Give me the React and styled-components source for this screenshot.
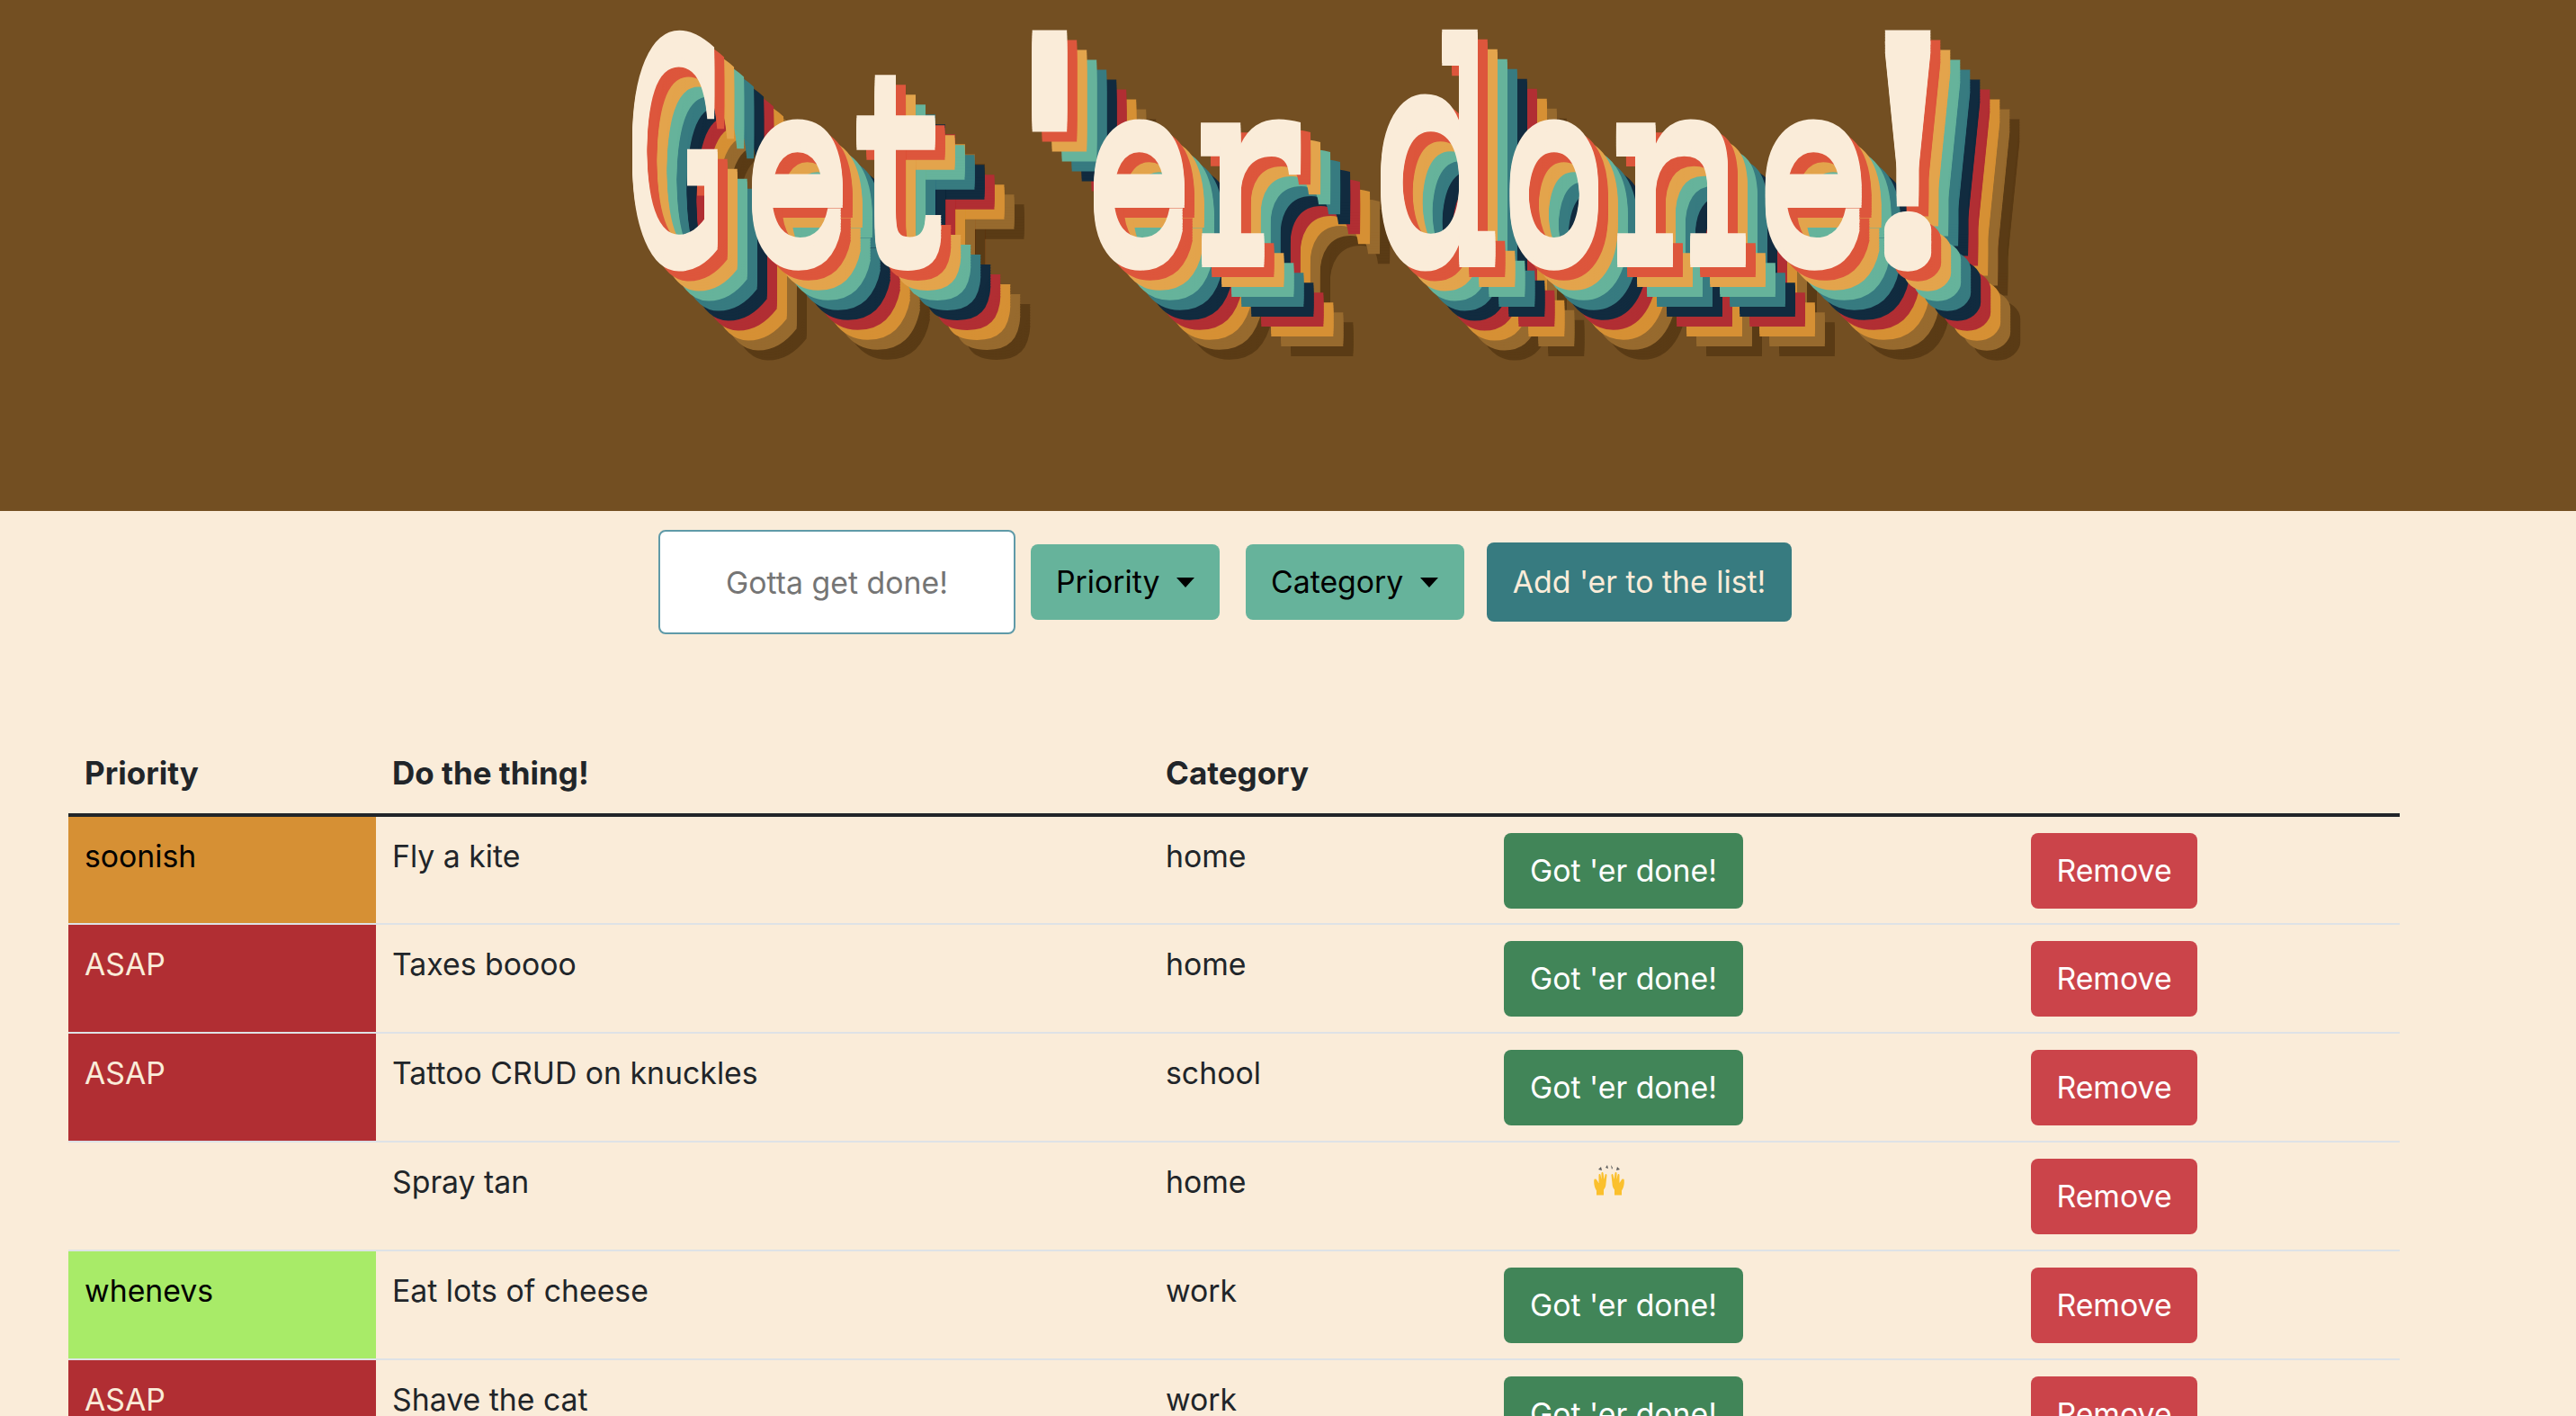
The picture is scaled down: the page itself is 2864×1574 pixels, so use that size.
import React from 'react'
import styled, { createGlobalStyle } from 'styled-components'

const CREAM = '#faecd9'
const STRIPES = ['#dd563c', '#e3a44c', '#66b39b', '#377b80', '#112b3f', '#b12e33', '#d69034', '#976a2e', '#5a3b15']

// each glyph is smeared vertically so the horizontals get fat like the original display face
const SMEAR = 26
const STEP = 3
const buildShadow = (sx, sy) => {
  const out = []
  const layers = [CREAM, ...STRIPES]
  layers.forEach((color, i) => {
    for (let dy = -SMEAR / 2; dy <= SMEAR / 2; dy += STEP) {
      out.push(`${((11 * i) / sx).toFixed(2)}px ${((11 * i + dy) / sy).toFixed(2)}px 0 ${color}`)
    }
  })
  return out.join(',')
}

const GLYPHS = [
  { c: 'G', w: 131, sx: 0.46, sy: 1.04 },
  { c: 'e', w: 119, sx: 0.66, sy: 0.85 },
  { c: 't', w: 154, sx: 0.83, sy: 0.9 },
  { c: "'", w: 107, sx: 1.6, sy: 1.06 },
  { c: 'e', w: 120, sx: 0.66, sy: 0.85 },
  { c: 'r', w: 198, sx: 0.81, sy: 0.85 },
  { c: 'd', w: 145, sx: 0.73, sy: 1.02 },
  { c: 'o', w: 119, sx: 0.63, sy: 0.85 },
  { c: 'n', w: 164, sx: 0.8, sy: 0.85 },
  { c: 'e', w: 88, sx: 0.7, sy: 0.85 },
  { c: '!', w: 59, sx: 1.3, sy: 1.06 },
]

const ROWS = [
  { priority: 'soonish', task: 'Fly a kite', category: 'home' },
  { priority: 'ASAP', task: 'Taxes boooo', category: 'home' },
  { priority: 'ASAP', task: 'Tattoo CRUD on knuckles', category: 'school' },
  { priority: '', task: 'Spray tan', category: 'home', done: true },
  { priority: 'whenevs', task: 'Eat lots of cheese', category: 'work' },
  { priority: 'ASAP', task: 'Shave the cat', category: 'work' },
]

const PRIORITY_COLORS = {
  soonish: { bg: '#d69034', fg: '#000' },
  ASAP: { bg: '#b12e33', fg: CREAM },
  whenevs: { bg: '#a8eb68', fg: '#000' },
}

const GlobalStyle = createGlobalStyle`
  html, body {
    margin: 0;
    height: 100%;
    overflow: hidden;
    background: ${CREAM};
    font-family: Inter, "Liberation Sans", sans-serif;
    font-size: 33.8px;
    line-height: 48px;
    color: #212529;
  }
`

const Banner = styled.header`
  height: 568px;
  background: #734f22;
  overflow: hidden;
`

const Title = styled.h1`
  margin: 0;
  padding: 24px 0 0 695px;
  display: flex;
  font-family: "DejaVu Serif", serif;
  font-weight: 400;
  font-size: 310px;
  line-height: 310px;
  color: ${CREAM};
`

const Glyph = styled.span`
  display: block;
  flex: none;
  white-space: pre;
  transform-origin: left 262px;
`

const Form = styled.form`
  display: flex;
  align-items: center;
  height: 116px;
  margin-top: 21px;
  padding-left: 732px;
`

const TaskInput = styled.input`
  box-sizing: border-box;
  width: 397px;
  height: 116px;
  margin-right: 17px;
  border: 2px solid #5f9aa8;
  border-radius: 8px;
  background: #fff;
  text-align: center;
  font: inherit;
  &::placeholder {
    color: #757575;
    opacity: 1;
  }
`

const Dropdown = styled.button`
  display: flex;
  align-items: center;
  box-sizing: border-box;
  height: 84px;
  width: ${(p) => p.$width}px;
  margin-right: ${(p) => p.$gap}px;
  padding: 0 0 0 28px;
  border: 0;
  border-radius: 8px;
  background: #66b39b;
  color: #000;
  font: inherit;
  &::after {
    content: '';
    margin-left: 19px;
    border-top: 11px solid #000;
    border-left: 10px solid transparent;
    border-right: 10px solid transparent;
  }
`

const AddButton = styled.button`
  box-sizing: border-box;
  height: 88px;
  width: 339px;
  padding: 0;
  border: 0;
  border-radius: 8px;
  background: #377b80;
  color: ${CREAM};
  font: inherit;
`

const Table = styled.table`
  width: 2592px;
  margin: 115px 0 0 76px;
  border-collapse: collapse;
  table-layout: fixed;
`

const Head = styled.th`
  height: 77px;
  padding: 0 18px 7px;
  text-align: left;
  font-weight: 700;
  font-size: 35px;
  border-bottom: 4px solid #212529;
`

const Row = styled.tr`
  height: 121px;
  border-bottom: 2px solid #dee2e6;
`

const Cell = styled.td`
  padding: 0 16px;
  vertical-align: top;
  line-height: 48px;
`

const TextCell = styled(Cell)`
  padding: 20px 18px 0;
`

const PriorityCell = styled(TextCell)`
  background: ${(p) => p.$bg || 'transparent'};
  color: ${(p) => p.$fg || 'inherit'};
`

const ActionCell = styled(Cell)`
  padding-top: 18px;
`

const ActionButton = styled.button`
  display: block;
  box-sizing: border-box;
  height: 84px;
  width: ${(p) => p.$width}px;
  padding: 0;
  border: 0;
  border-radius: 8px;
  background: ${(p) => p.$bg};
  color: #fff;
  font: inherit;
`

const Hands = styled.svg`
  display: block;
  width: 38px;
  height: 36px;
  margin: 4px 0 0 96px;
`

const RaisedHands = () => (
  <Hands viewBox="0 0 38 36">
    <g fill="#5c5c5c">
      <path d="M7 6l3-3 1 4z" />
      <path d="M15 4l2-3 1 4z" />
      <path d="M21 1l2 3-1 2z" />
      <path d="M28 3l3 3-4 1z" />
    </g>
    <g fill="#fbc02d">
      <path d="M3 17c1-1 2 0 2.500 1l2 3 0-9c0-1.500 2-1.500 2 0l1 5 0-7c0-1.500 2-1.500 2 0l1 7 1-5c.5-1.500 2-1 2 .5l-1 9c0 3-1 5-2.500 7l0 6-8 0 0-5c-2-3-3.500-8-2.500-13z" />
      <path d="M35 17c-1-1-2 0-2.500 1l-2 3 0-9c0-1.500-2-1.500-2 0l-1 5 0-7c0-1.500-2-1.500-2 0l-1 7-1-5c-.5-1.500-2-1-2 .5l1 9c0 3 1 5 2.500 7l0 6 8 0 0-5c2-3 3.500-8 2.500-13z" />
    </g>
  </Hands>
)

export default function App() {
  return (
    <>
      <GlobalStyle />
      <Banner>
        <Title>
          {GLYPHS.map((g, i) => (
            <Glyph
              key={i}
              style={{
                width: g.w,
                transform: `scale(${g.sx}, ${g.sy})`,
                textShadow: buildShadow(g.sx, g.sy),
              }}
            >
              {g.c}
            </Glyph>
          ))}
        </Title>
      </Banner>

      <Form>
        <TaskInput placeholder="Gotta get done!" />
        <Dropdown type="button" $width={210} $gap={29}>Priority</Dropdown>
        <Dropdown type="button" $width={243} $gap={25}>Category</Dropdown>
        <AddButton type="button">Add 'er to the list!</AddButton>
      </Form>

      <Table>
        <colgroup>
          <col width="342" />
          <col width="860" />
          <col width="378" />
          <col width="586" />
          <col width="426" />
        </colgroup>
        <thead>
          <tr>
            <Head>Priority</Head>
            <Head>Do the thing!</Head>
            <Head>Category</Head>
            <Head />
            <Head />
          </tr>
        </thead>
        <tbody>
          {ROWS.map((row, i) => {
            const colors = PRIORITY_COLORS[row.priority] || {}
            return (
              <Row key={i}>
                <PriorityCell $bg={colors.bg} $fg={colors.fg}>{row.priority}</PriorityCell>
                <TextCell>{row.task}</TextCell>
                <TextCell>{row.category}</TextCell>
                {row.done ? (
                  <TextCell><RaisedHands /></TextCell>
                ) : (
                  <ActionCell><ActionButton $width={266} $bg="#418558">Got 'er done!</ActionButton></ActionCell>
                )}
                <ActionCell><ActionButton $width={185} $bg="#cb444a">Remove</ActionButton></ActionCell>
              </Row>
            )
          })}
        </tbody>
      </Table>
    </>
  )
}
